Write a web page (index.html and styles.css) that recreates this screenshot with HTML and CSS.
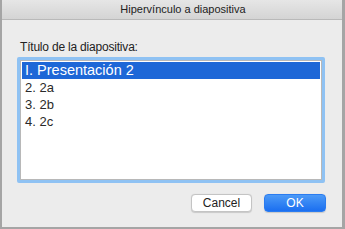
FILE: index.html
```html
<!DOCTYPE html>
<html lang="es">
<head>
  <meta charset="UTF-8" />
  <title>Hipervínculo a diapositiva</title>
  <link rel="stylesheet" href="styles.css">
</head>
<body>
  <div class="window">
    <div class="titlebar">Hipervínculo a diapositiva</div>
    <div class="content">
      <div class="label">Título de la diapositiva:</div>
      <div class="list-ring">
        <ul class="list">
          <li class="selected">I. Presentación 2</li>
          <li>2. 2a</li>
          <li>3. 2b</li>
          <li>4. 2c</li>
        </ul>
      </div>
      <div class="actions">
        <button class="btn">Cancel</button>
        <button class="btn primary">OK</button>
      </div>
    </div>
  </div>
</body>
</html>
```

FILE: styles.css
```css
/* Dialog window */
body {
  margin: 0;
  background: #a5a5a5;
  font-family: 'Liberation Sans', Arial, sans-serif;
}

.window {
  width: 340px;
  height: 227px;
  margin-left: 2px;
  background: #ececec;
  display: flex;
  flex-direction: column;
}

.titlebar {
  height: 19px;
  border-bottom: 1px solid #b9b9b9;
  background: linear-gradient(#e6e6e6, #d4d4d4);
  font-size: 11px;
  line-height: 19px;
  color: #222;
  text-align: center;
  padding-left: 22px;
}

.content {
  padding: 20px 17px 0 18px;
}

.label {
  font-size: 12px;
  line-height: 14px;
  color: #222;
  margin-bottom: 3px;
  letter-spacing: -0.2px;
}

/* List with focus ring */
.list-ring {
  border: 3px solid #8fc2f3;
  border-radius: 2px;
  margin-left: -3px;
}

.list {
  list-style: none;
  margin: 0;
  padding: 1px;
  height: 116px;
  border: 1px solid #b8b8b8;
  background: #fff;
}

.list li {
  font-size: 13px;
  line-height: 17px;
  height: 17px;
  padding-left: 3px;
  color: #2a2a2a;
}

.list li.selected {
  background: #1d67d7;
  color: #fff;
  font-size: 14.5px;
}

/* Buttons */
.actions {
  display: flex;
  justify-content: flex-end;
  gap: 12px;
  margin-top: 11px;
  margin-right: -1px;
}

.btn {
  width: 61px;
  height: 18px;
  padding: 0;
  border: 1px solid #c4c4c4;
  border-radius: 4px;
  background: #fff;
  font-family: inherit;
  font-size: 12px;
  color: #222;
  box-shadow: 0 0.5px 1px rgba(0, 0, 0, 0.15);
}

.btn.primary {
  width: 62px;
  border-color: #2b7cf0;
  background: linear-gradient(#4c9af7, #1b6ff0);
  color: #fff;
}
```
